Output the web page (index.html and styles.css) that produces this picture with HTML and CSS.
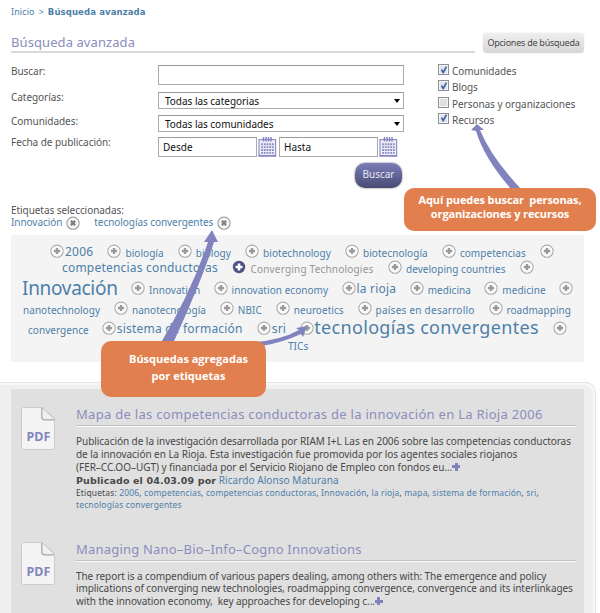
FILE: index.html
```html
<!DOCTYPE html>
<html lang="es">
<head>
<meta charset="utf-8">
<title>Búsqueda avanzada</title>
<link rel="stylesheet" href="styles.css">
</head>
<body>
<svg class="defs" width="0" height="0" aria-hidden="true">
  <defs>
    <filter id="soft" x="-30%" y="-30%" width="160%" height="160%"><feGaussianBlur stdDeviation=".5"/></filter>
    <symbol id="plus" viewBox="0 0 14 14">
      <circle cx="7" cy="7.2" r="6.1" fill="#fff" stroke="#aaa" stroke-width="1.1" filter="url(#soft)"/>
      <circle cx="7" cy="7" r="5.3" fill="#fafafa"/>
      <path d="M7 3.900v6.200M3.900 7h6.200" stroke="#999" stroke-width="2.300"/>
    </symbol>
    <symbol id="cross" viewBox="0 0 14 14">
      <circle cx="7" cy="7.2" r="6.1" fill="#fff" stroke="#999" stroke-width="1.1" filter="url(#soft)"/>
      <circle cx="7" cy="7" r="5.3" fill="#f6f6f6"/>
      <path d="M4.9 4.900l4.200 4.200M9.100 4.900l-4.200 4.200" stroke="#808080" stroke-width="2.300"/>
    </symbol>
    <symbol id="plus-on" viewBox="0 0 14 14">
      <circle cx="7" cy="7" r="6.2" fill="#4f4f83"/>
      <path d="M7 3.5v7M3.5 7h7" stroke="#fff" stroke-width="2.6"/>
    </symbol>
    <symbol id="cal" viewBox="0 0 19 20">
      <rect x="1" y="2.6" width="16.6" height="16" fill="#eeeefa" stroke="#9092c6" stroke-width="1.2"/>
      <path d="M.4 19h17.800" stroke="#8385bd" stroke-width="1.4"/>
      <path d="M5.5 0v4.5M8 0v4.5M10.5 0v4.5M13 0v4.5" stroke="#7f81bb" stroke-width="1.4"/>
      <path d="M3.100 7.200h13M3.100 10.100h13M3.100 13h13M3.100 15.900h13" stroke="#8f91c5" stroke-width="1.9" stroke-dasharray="1.900 .8"/>
    </symbol>
    <symbol id="pdf" viewBox="0 0 36 46">
      <path d="M3.5 1.5H22L34.5 12.5V41.500q0 2-2 2H3.5q-2 0-2-2V3.5q0-2 2-2Z" fill="#f4f4f4" stroke="#cacaca"/>
      <path d="M22 1.5V10.5q0 3 3 3H34.5Z" fill="#f0f0f0"/>
      <path d="M21.800 2V11q0 2.800 3 2.800H34" fill="none" stroke="#a6a6a6" stroke-width="1.200"/>
      <path d="M22 1.5L34.5 13" stroke="#bbb" stroke-width=".8"/>
    </symbol>
  </defs>
</svg>
<main class="page">
  <nav class="crumbs"><a>Inicio</a><span>&gt;</span><b>Búsqueda avanzada</b></nav>
  <header class="head">
    <h1>Búsqueda avanzada</h1>
    <button class="options">Opciones de búsqueda</button>
  </header>
  <section class="search">
    <form class="form">
      <div class="row r1"><label>Buscar:</label><div class="field tall"></div></div>
      <div class="row r2"><label>Categorías:</label><div class="field select">Todas las categorias<i></i></div></div>
      <div class="row r3"><label>Comunidades:</label><div class="field select">Todas las comunidades<i></i></div></div>
      <div class="row r4"><label>Fecha de publicación:</label>
        <div class="dates">
          <div class="field date">Desde</div><svg class="cal"><use href="#cal"/></svg>
          <div class="field date second">Hasta</div><svg class="cal"><use href="#cal"/></svg>
        </div>
      </div>
      <button class="submit">Buscar</button>
    </form>
    <ul class="checks">
      <li class="on"><i><svg viewBox="0 0 12 12"><path d="M3 5.5l2 3.5 4-7"/></svg></i>Comunidades</li>
      <li class="on"><i><svg viewBox="0 0 12 12"><path d="M3 5.5l2 3.5 4-7"/></svg></i>Blogs</li>
      <li><i></i>Personas y organizaciones</li>
      <li class="on"><i><svg viewBox="0 0 12 12"><path d="M3 5.5l2 3.5 4-7"/></svg></i>Recursos</li>
    </ul>
  </section>
  <section class="selected">
    <div>Etiquetas seleccionadas:</div>
    <div class="picked"><a>Innovación</a><svg class="ic"><use href="#cross"/></svg><a class="last">tecnologías convergentes</a><svg class="ic"><use href="#cross"/></svg></div>
  </section>
  <section class="cloud">
    <div class="line l1">
      <span><svg class="ic"><use href="#plus"/></svg><a class="m">2006</a></span>
      <span><svg class="ic"><use href="#plus"/></svg><a>biología</a></span>
      <span><svg class="ic"><use href="#plus"/></svg><a>biology</a></span>
      <span><svg class="ic"><use href="#plus"/></svg><a>biotechnology</a></span>
      <span><svg class="ic"><use href="#plus"/></svg><a>biotecnología</a></span>
      <span><svg class="ic"><use href="#plus"/></svg><a>competencias</a></span>
      <svg class="ic"><use href="#plus"/></svg>
    </div>
    <div class="line l2">
      <a class="m">competencias conductoras</a>
      <span><svg class="ic"><use href="#plus-on"/></svg><a class="off">Converging Technologies</a></span>
      <span><svg class="ic"><use href="#plus"/></svg><a>developing countries</a></span>
      <svg class="ic"><use href="#plus"/></svg>
    </div>
    <div class="line l3">
      <a class="xl">Innovación</a>
      <span><svg class="ic"><use href="#plus"/></svg><a>Innovation</a></span>
      <span><svg class="ic"><use href="#plus"/></svg><a>innovation economy</a></span>
      <span><svg class="ic"><use href="#plus"/></svg><a class="m">la rioja</a></span>
      <span><svg class="ic"><use href="#plus"/></svg><a>medicina</a></span>
      <span><svg class="ic"><use href="#plus"/></svg><a>medicine</a></span>
      <svg class="ic"><use href="#plus"/></svg>
    </div>
    <div class="line l4">
      <a>nanotechnology</a>
      <span><svg class="ic"><use href="#plus"/></svg><a>nanotecnología</a></span>
      <span><svg class="ic"><use href="#plus"/></svg><a>NBIC</a></span>
      <span><svg class="ic"><use href="#plus"/></svg><a>neuroetics</a></span>
      <span><svg class="ic"><use href="#plus"/></svg><a class="wide">países en desarrollo</a></span>
      <span><svg class="ic"><use href="#plus"/></svg><a>roadmapping</a></span>
    </div>
    <div class="line l5">
      <a>convergence</a>
      <span><svg class="ic"><use href="#plus"/></svg><a class="m">sistema de formación</a></span>
      <span><svg class="ic"><use href="#plus"/></svg><a class="m">sri</a></span>
      <span><svg class="ic"><use href="#plus"/></svg><a class="l">tecnologías convergentes</a></span>
      <svg class="ic"><use href="#plus"/></svg>
    </div>
    <div class="line l6"><a>TICs</a></div>
  </section>
  <section class="results">
    <div class="list">
      <article>
        <div class="thumb"><svg><use href="#pdf"/></svg><b>PDF</b></div>
        <div class="body">
          <h2 class="long">Mapa de las competencias conductoras de la innovación en La Rioja 2006</h2>
          <p>Publicación de la investigación desarrollada por RIAM I+L Las en 2006 sobre las competencias conductoras<br>de la innovación en La Rioja. Esta investigación fue promovida por los agentes sociales riojanos<br><span class="loose">(FER–CC.OO–UGT) y financiada por el Servicio Riojano de Empleo con fondos eu...</span><i class="more"></i></p>
          <p class="by"><b>Publicado el 04.03.09 por</b> <a>Ricardo Alonso Maturana</a></p>
          <p class="tags">Etiquetas: <a>2006</a>, <a>competencias</a>, <a>competencias conductoras</a>, <a>Innovación</a>, <a>la rioja</a>, <a>mapa</a>, <a>sistema de formación</a>, <a>sri</a>,<br><a>tecnologías convergentes</a></p>
        </div>
      </article>
      <article>
        <div class="thumb"><svg><use href="#pdf"/></svg><b>PDF</b></div>
        <div class="body">
          <h2>Managing Nano–Bio–Info–Cogno Innovations</h2>
          <p class="tight">The report is a compendium of various papers dealing, among others with: The emergence and policy<br>implications of converging new technologies, roadmapping convergence, convergence and its interlinkages<br>with the innovation economy,&nbsp; key approaches for developing c...<i class="more"></i></p>
        </div>
      </article>
    </div>
  </section>
  <svg class="arrows" width="600" height="613" viewBox="0 0 600 613" fill="#8083bd">
    <path d="M477 124l7 6h-4q11 27 41 59h-10q-27-31-35-58l-5-1z"/>
    <path d="M212 230l6 12h-4Q202 280 174 341h-12Q192 290 208 242h-4z"/>
    <path d="M255 342Q281 340 299 330l-3-2 11-2-4 11-2-3Q284 342 262 346z"/>
  </svg>
  <div class="note n1"><span>Aquí puedes buscar&nbsp; personas,</span><span>organizaciones y recursos</span></div>
  <div class="note n2"><span>Búsquedas agregadas</span><span>por etiquetas</span></div>
</main>
</body>
</html>
```
FILE: styles.css
```css
* { box-sizing: border-box; }
body { margin: 0; background: #fff; font: 10px/12px "Noto Sans", sans-serif; color: #555; }
.page { position: relative; width: 600px; height: 613px; overflow: hidden; white-space: nowrap; }
.defs { position: absolute; }
a { color: #4d7fa9; }
h1, h2, p, ul { margin: 0; padding: 0; font-weight: 400; }
button { font: inherit; border: 0; padding: 0; white-space: nowrap; }

.crumbs { display: flex; gap: 4px; padding: 6px 0 0 11px; height: 33px; font-size: 9px; color: #4d7fa9; }
.crumbs a { letter-spacing: .1px; }
.crumbs b { font: bold 8.5px/12px "DejaVu Sans", sans-serif; letter-spacing: .12px; }
.head { display: flex; justify-content: space-between; align-items: flex-start; height: 32px; padding: 0 16px 0 11px; }
.head h1 { width: 464px; height: 20px; border-bottom: 2px solid #d8d8d8; font-size: 13px; line-height: 18px; color: #8b8dbd; letter-spacing: .08px; }
.options { width: 101px; height: 20px; border-radius: 4px; background: linear-gradient(#efefef, #d7d7d8); box-shadow: 0 0 1px #bbb; font-size: 9px; letter-spacing: -.25px; color: #484848; }

.search { display: flex; height: 139px; padding-left: 11px; }
.form { width: 393px; margin-right: 34px; }
.row { display: flex; align-items: flex-start; }
.row label { width: 147px; letter-spacing: -.05px; }
.r1 { height: 27px; }
.r2, .r3 { height: 23px; }
.r2 label { margin-top: -1px; }
.r4 { height: 26px; }
.r4 label { margin-top: -2px; }
.field { width: 246px; border: 1px solid #aaa; border-top-color: #999; background: #fff; color: #111; }
.tall { height: 20px; }
.select { display: flex; justify-content: space-between; align-items: center; height: 17px; padding: 0 3px 0 6px; letter-spacing: -.03px; }
.select i { border: 3.5px solid transparent; border-top: 4px solid #000; border-bottom: 0; }
.dates { display: flex; margin-top: -1px; }
.date { width: 99px; height: 20px; padding-left: 4px; line-height: 19px; }
.second { margin-left: 2px; }
.cal { width: 19px; height: 20px; margin-left: 1px; }
.submit { display: block; width: 47px; height: 25px; margin: -1px 2px 0 auto; border-radius: 10px; background: linear-gradient(#7b7eb7, #484a73); box-shadow: 0 0 2px #555; color: #e8e8f5; line-height: 23px; padding-bottom: 2px; }
.checks { list-style: none; }
.checks li { display: flex; gap: 3px; height: 16.3px; letter-spacing: -.05px; }
.checks i { width: 11px; height: 11px; margin-top: -1px; border: 1px solid #8c8f94; box-shadow: inset 0 0 0 1px #f4f4f4; background: #e0e0e0; }
.checks .on i { background: #dde4ee; }
.checks svg { display: block; width: 10px; height: 10px; margin: -.5px; fill: none; stroke: #4560a5; stroke-width: 2; }

.selected { height: 31px; padding-left: 11px; letter-spacing: -.06px; }
.ic { flex: none; width: 14px; height: 14px; }
.picked { display: flex; align-items: center; height: 13px; }
.picked a { position: relative; top: -1px; }
.picked .ic { margin-left: 4px; }
.picked .last { margin-left: 14px; }

.cloud { width: 573px; height: 127px; margin-left: 11px; padding-top: 8px; background: #f4f4f4; letter-spacing: .05px; }
.line { display: flex; justify-content: space-between; align-items: center; }
.line span { display: flex; align-items: center; gap: 4px; }
.line a { position: relative; top: 2px; }
.line .m { font-size: 12px; letter-spacing: .2px; top: 1px; }
.line span .m { margin-left: -3px; }
.line .l { font-size: 18px; margin-left: -4px; top: -1px; letter-spacing: .33px; }
.line .xl { font-size: 19px; top: 0; letter-spacing: -.3px; }
.line .off { color: #969696; letter-spacing: .2px; }
.line .wide { letter-spacing: .25px; }
.l1 { height: 16px; padding: 0 30px 0 39px; }
.l2 { height: 15px; padding: 0 50px 0 51px; }
.l3 { height: 28px; padding: 0 11px 0 11px; }
.l4 { height: 11px; padding: 0 13px 0 12px; }
.l5 { height: 29px; padding: 0 17px 0 17px; }
.l5 > :first-child { margin-right: -1px; }
.l6 { height: 9px; padding-left: 277px; }
.l6 a { top: -1px; }

.results { width: 596px; height: 240px; margin-top: 20px; padding: 6px 12px 0 11px; border-top: 1px solid #e4e4e4; border-right: 1px solid #e4e4e4; border-radius: 0 10px 0 0; background: #efefef; box-shadow: inset -2px 2px 0 #f8f8f8; }
.list { width: 573px; height: 240px; padding-top: 17px; background: #e0e0e0; }
article { display: flex; height: 134.5px; padding-left: 9px; }
.thumb { width: 56px; }
.thumb svg { display: block; width: 36px; height: 46px; }
.thumb b { display: block; width: 37px; margin-top: -21px; text-align: center; font-size: 12.5px; color: #8385bd; }
.body { width: 500px; color: #484848; line-height: 12.9px; }
.body h2 { height: 20px; margin-bottom: 9px; border-bottom: 1px solid #c0c0c0; box-shadow: 0 1px #fafafa; font-size: 13px; line-height: 16px; letter-spacing: .2px; color: #8b8dbd; }
.body .long { letter-spacing: .3px; }
.body p { letter-spacing: -.045px; }
.body .loose { letter-spacing: -.03px; }
.body .tight { letter-spacing: -.075px; }
.more { display: inline-block; width: 8px; height: 8px; background: linear-gradient(#8083bd, #8083bd) center / 8px 3px no-repeat, linear-gradient(#8083bd, #8083bd) center / 3px 8px no-repeat; }
.body .by { line-height: 12px; letter-spacing: .06px; }
.by b { font: bold 9.5px/12px "DejaVu Sans", sans-serif; letter-spacing: .13px; }
.body .tags { font-size: 8.5px; line-height: 12px; letter-spacing: .14px; }

.arrows { position: absolute; left: 0; top: 0; }
.note { position: absolute; display: flex; flex-direction: column; align-items: center; border-radius: 10px; background: #e27f4e; color: #fff; font: bold 11px/14px "Open Sans", sans-serif; letter-spacing: -.12px; }
.n1 { left: 404px; top: 188px; width: 192px; height: 43px; padding-top: 5px; }
.n2 { left: 101px; top: 341px; width: 165px; height: 56px; padding: 9px 0 0 10px; line-height: 17px; letter-spacing: 0; }
```
